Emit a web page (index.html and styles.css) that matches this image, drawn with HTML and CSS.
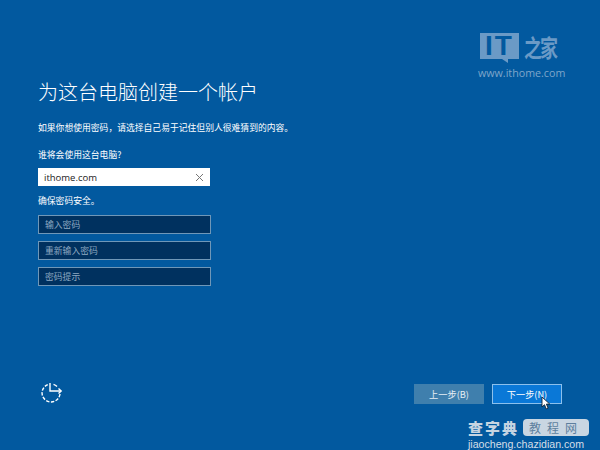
FILE: index.html
```html
<!DOCTYPE html>
<html lang="zh-CN">
<head>
  <meta charset="UTF-8" />
  <title>为这台电脑创建一个帐户</title>
  <link rel="stylesheet" href="styles.css">
</head>
<body>
  <div class="page">
    <div class="form">
      <h1>为这台电脑创建一个帐户</h1>
      <p class="intro">如果你想使用密码，请选择自己易于记住但别人很难猜到的内容。</p>
      <p class="who">谁将会使用这台电脑?</p>
      <div class="field field-name">
        <span>ithome.com</span>
        <svg class="clear" width="9" height="9" viewBox="0 0 9 9"><path d="M1 1l7 7M8 1l-7 7" stroke="#777" stroke-width="1" fill="none"/></svg>
      </div>
      <p class="safe">确保密码安全。</p>
      <div class="field field-dark">输入密码</div>
      <div class="field field-dark">重新输入密码</div>
      <div class="field field-dark">密码提示</div>
    </div>

    <div class="bottom">
      <svg class="access" width="22" height="22" viewBox="0 0 22 22" fill="none" stroke="#fff" stroke-width="1.4">
        <path d="M19 13a9 9 0 1 1-12-9.5" stroke-dasharray="3.4 1.5"/>
        <path d="M12.5 3.3a9 9 0 0 1 3.5 2.2"/>
        <path d="M9 2v8h11"/>
        <path d="M17.5 7.5l2.7 2.5-2.7 2.5"/>
      </svg>
      <div class="buttons">
        <button class="btn btn-back">上一步(B)</button>
        <button class="btn btn-next">下一步(N)</button>
      </div>
    </div>
  </div>

  <!-- watermarks and pointer sit over the screen -->
  <div class="mark-ithome">
    <div class="mark-logo">
      <span class="mark-it">IT</span>
      <span class="mark-zh">之家</span>
    </div>
    <div class="mark-url">www.ithome.com</div>
  </div>

  <svg class="cursor" width="11" height="14" viewBox="0 0 11 14">
    <path d="M1 1v10l2.5-2.3 1.7 4.2 1.9-.8-1.7-4h3.4z" fill="#fff" stroke="#123" stroke-width="0.9"/>
  </svg>

  <div class="mark-czd">
    <div class="czd-top">
      <span class="czd-name">查字典</span>
      <span class="czd-pill">教程网</span>
    </div>
    <div class="czd-url">jiaocheng.chazidian.com</div>
  </div>
</body>
</html>
```

FILE: styles.css
```css
* { box-sizing: border-box; }
html, body {
  margin: 0; height: 100%;
  overflow: hidden;
}
body {
  background: #02599f;
  color: #fff;
  font-family: 'Noto Sans CJK SC', 'Noto Sans', sans-serif;
  position: relative;
}
.page {
  height: 450px;
  padding: 78px 38px 0;
  display: flex; flex-direction: column;
}
.form { width: 260px; flex: 1; }
h1 {
  margin: 0;
  font-size: 20px; font-weight: 300;
  line-height: 28px;
  white-space: nowrap;
}
p { margin: 0; font-size: 8.8px; line-height: 14px; white-space: nowrap; }
.intro { margin-top: 15px; }
.who { margin-top: 13px; }
.field {
  width: 173px; height: 19px;
  display: flex; align-items: center;
  padding: 0 6px;
}
.field-name {
  margin-top: 6px;
  width: 172px; height: 18px;
  background: #fff; color: #222;
  font-family: 'Open Sans', sans-serif; font-size: 9.5px;
  justify-content: space-between;
}
.safe { margin-top: 8px; }
.field-dark {
  margin-bottom: 7px;
  background: #00315f;
  border: 1px solid #6f97b8;
  color: #8ea9c2;
  font-size: 8.8px;
}
.safe + .field-dark { margin-top: 7px; }
.bottom {
  display: flex; justify-content: space-between; align-items: flex-start;
  height: 66px;
}
.access { margin-top: -3px; margin-left: 3px; }
.buttons { display: flex; gap: 8px; }
.btn {
  width: 70px; height: 20px; padding: 0;
  font-family: inherit; font-size: 9.2px; color: #fff;
  border: 0;
}
.btn-back { background: #3f7fad; color: #e6eef5; }
.btn-next { background: #0a78d7; border: 1px solid #8cc0ec; }

/* overlays */
.mark-ithome {
  position: absolute; left: 478px; top: 33px;
  width: 90px;
}
.mark-logo { display: flex; align-items: flex-start; height: 27px; }
.mark-it {
  position: relative;
  width: 39px; height: 26px;
  margin-left: 2px;
  background: #6b9ac6; color: #02599f;
  font: bold 28px/26px 'Liberation Sans', sans-serif;
  letter-spacing: 2px;
  text-align: center;
}
.mark-it::after {
  content: ''; position: absolute;
  left: 22px; top: 26px;
  border-top: 4px solid #6b9ac6;
  border-left: 6px solid transparent;
}
.mark-zh {
  color: #6b9ac6; font-size: 18px; font-weight: 700;
  line-height: 26px; margin-left: 5px;
  letter-spacing: -2px;
  white-space: nowrap;
  transform: scaleY(1.35);
}
.mark-url {
  margin-top: 6px;
  color: #7ea6ca;
  font: 10.7px/14px 'Open Sans', sans-serif;
  white-space: nowrap;
}
.cursor { position: absolute; left: 541px; top: 396px; }
.mark-czd {
  position: absolute; left: 468px; top: 419px;
  width: 132px;
}
.czd-top { display: flex; align-items: center; gap: 5px; height: 17px; }
.czd-name {
  width: 50px;
  color: #c5d4e2; font-size: 15px; line-height: 17px; font-weight: 900;
  letter-spacing: 2px; white-space: nowrap;
}
.czd-pill {
  background: #c9d6e2; color: #5d7f9e;
  border-radius: 4px;
  width: 66px; height: 17px;
  font-size: 12px; line-height: 17px;
  text-align: center; letter-spacing: 6px;
  white-space: nowrap;
}
.czd-url {
  margin-top: 2px;
  color: #d5dfe8;
  font: 10.6px/12px 'Liberation Sans', sans-serif;
  white-space: nowrap;
}
```
